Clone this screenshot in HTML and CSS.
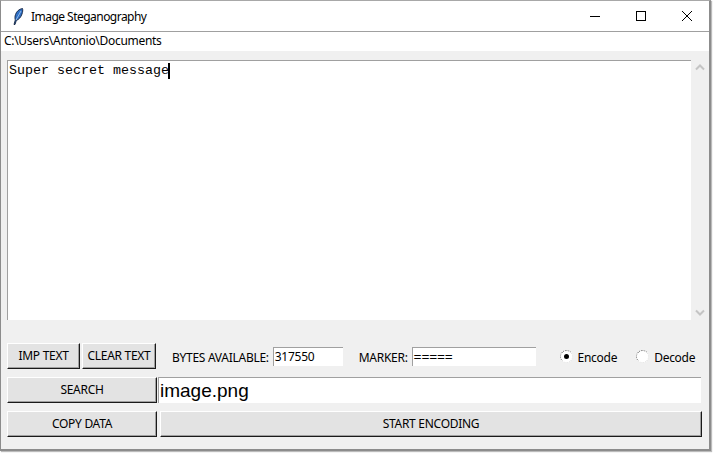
FILE: index.html
```html
<!DOCTYPE html>
<html lang="en">
<head>
<meta charset="utf-8">
<title>Image Steganography</title>
<link rel="stylesheet" href="styles.css">
</head>
<body>
<div class="window">
  <header class="titlebar">
    <svg class="feather" width="11" height="17" viewBox="0 0 11 17"><path d="M9.500 .5C6 1 3.500 3.500 2.500 6.500 1.800 8.500 1.800 10.500 2.300 12L1 16.500h1L3.300 12.500C6 11.500 8 9 9 6 9.700 4 10 2 9.500 .5z" fill="#2f6fc4" stroke="#12233f" stroke-width=".9"/><path d="M8 3 3 12" stroke="#a9cdf2" stroke-width=".8" fill="none"/></svg>
    <span class="title">Image Steganography</span>
    <div class="controls">
      <svg width="12" height="12" viewBox="0 0 12 12"><path d="M1 6.500h10" stroke="#000"/></svg>
      <svg width="12" height="12" viewBox="0 0 12 12"><rect x="1.500" y="1.500" width="9" height="9" fill="none" stroke="#000"/></svg>
      <svg width="12" height="12" viewBox="0 0 12 12"><path d="M1 1l10 10M11 1 1 11" stroke="#000"/></svg>
    </div>
  </header>
  <div class="path">C:\Users\Antonio\Documents</div>
  <div class="editor-row">
    <div class="editor"><span>Super secret message</span><i class="caret"></i></div>
    <div class="scrollbar">
      <svg width="10" height="7" viewBox="0 0 10 7"><path d="M1 5.500 5 1.500l4 4" fill="none" stroke="#c4c4c4" stroke-width="2"/></svg>
      <svg width="10" height="7" viewBox="0 0 10 7"><path d="M1 1.500 5 5.500l4-4" fill="none" stroke="#c4c4c4" stroke-width="2"/></svg>
    </div>
  </div>
  <div class="row row-tools">
    <button class="btn btn-imp">IMP TEXT</button>
    <button class="btn btn-clear">CLEAR TEXT</button>
    <span class="label label-bytes">BYTES AVAILABLE:</span>
    <div class="field field-bytes">317550</div>
    <span class="label label-marker">MARKER:</span>
    <div class="field field-marker mono">=====</div>
    <span class="radio on"></span><span class="label radio-label">Encode</span>
    <span class="radio off"></span><span class="label radio-label">Decode</span>
  </div>
  <div class="row row-search">
    <button class="btn btn-wide">SEARCH</button>
    <div class="file">image.png</div>
  </div>
  <div class="row row-start">
    <button class="btn btn-wide">COPY DATA</button>
    <button class="btn btn-start">START ENCODING</button>
  </div>
</div>
</body>
</html>
```
FILE: styles.css
```css
* { box-sizing: border-box; }
html, body { margin: 0; background: #fff; }
body { width: 713px; height: 453px; overflow: hidden; font-family: "Noto Sans", sans-serif; font-size: 12px; color: #000; }
.window { width: 711px; height: 451px; background: #f0f0f0; border: 1px solid #8c8c8c; border-top-color: #a8a8a8; border-right-width: 2px; border-bottom-width: 2px; box-shadow: 1px 1px 1px #bbb; }
.titlebar { height: 31px; background: #fff; display: flex; align-items: center; padding-left: 12px; border-bottom: 1px solid #a0a0a0; }
.feather { margin-right: 7px; }
.title { letter-spacing: -.53px; }
.controls { margin-left: auto; display: flex; gap: 34px; padding-right: 16px; }
.path { height: 19px; background: #fff; line-height: 18px; padding-left: 3px; letter-spacing: -.3px; }
.editor-row { display: flex; margin: 9px 0 0 6px; height: 260px; }
.editor { width: 684px; background: #fff; border-top: 1px solid #a0a0a0; border-left: 1px solid #a0a0a0; padding: 2px 0 0 1px; font-family: "Liberation Mono", monospace; font-size: 13.330px; line-height: 15px; height: 260px; display: flex; align-items: flex-start; }
.caret { display: block; width: 2px; height: 16px; background: #000; margin-left: -1px; }
.scrollbar { width: 17px; display: flex; flex-direction: column; justify-content: space-between; align-items: center; padding: 4px 0; }
.row { display: flex; align-items: center; margin-left: 6px; }
.row-tools { height: 26px; margin-top: 23px; }
.row-search { height: 26px; margin-top: 8px; }
.row-start { height: 26px; margin-top: 8px; }
.btn { height: 26px; padding: 0 0 2px; background: #e3e3e3; border: 1px solid; border-color: #fff #1a1a1a #1a1a1a #fff; box-shadow: inset -1px -1px 0 #a0a0a0; font: inherit; letter-spacing: -.28px; color: #000; }
.btn-imp { width: 73px; }
.btn-clear { width: 74px; margin-left: 2px; }
.btn-wide { width: 150px; flex: none; }
.btn-start { width: 542px; margin-left: 3px; }
.label { letter-spacing: -.28px; padding-top: 2px; }
.label-bytes { margin-left: 16px; }
.field { height: 19px; background: #fff; border-top: 1px solid #a0a0a0; border-left: 1px solid #a0a0a0; line-height: 17px; padding-left: 1px; letter-spacing: -.25px; }
.field-bytes { width: 70px; margin-left: 4px; }
.label-marker { margin-left: 16px; }
.field-marker { width: 124px; margin-left: 4px; }
.mono { font-family: "Liberation Mono", monospace; font-size: 13.330px; letter-spacing: -.2px; line-height: 20px; }
.radio { width: 13px; height: 13px; border-radius: 50%; border: 1px dotted; border-color: #666 #ddd #ddd #666; background: #fff; flex: none; display: flex; align-items: center; justify-content: center; }
.radio.on { margin-left: 24px; }
.radio.on::after { content: ""; width: 5px; height: 5px; border-radius: 50%; background: #000; }
.radio.off { margin-left: 19px; }
.radio-label { margin-left: 5px; }
.file { width: 543px; height: 26px; margin-left: 1px; background: #fff; border-top: 1px solid #a0a0a0; border-left: 1px solid #a0a0a0; font-family: "Liberation Sans", sans-serif; font-size: 19px; line-height: 25px; padding-left: 1px; }
```
